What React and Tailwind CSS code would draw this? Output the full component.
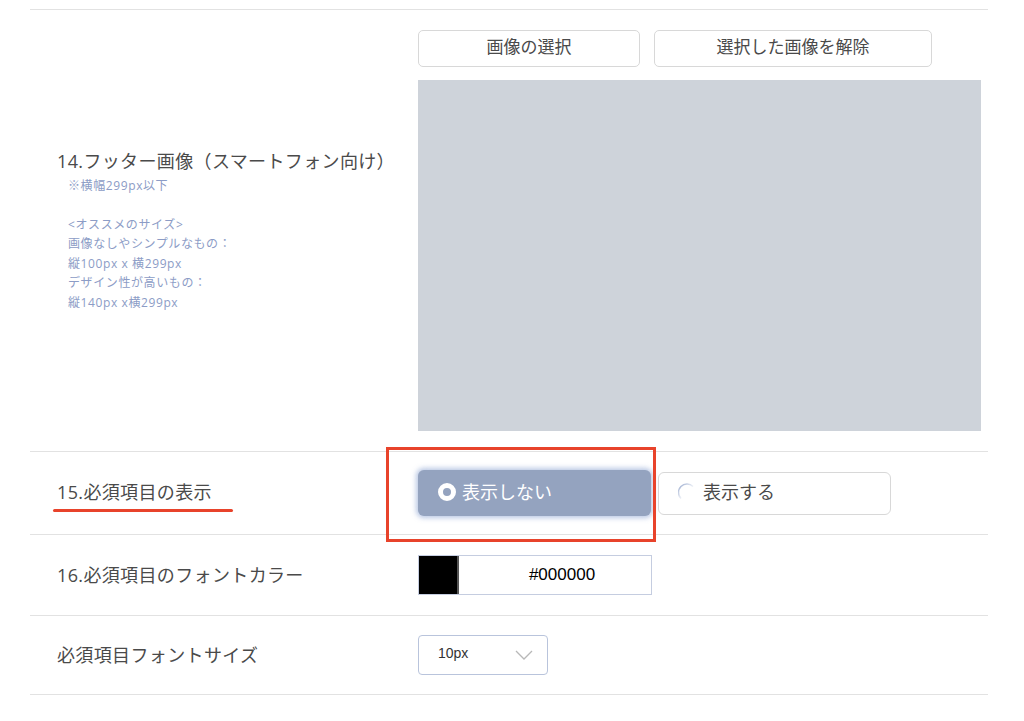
import React from "react";

const font = { fontFamily: '"Open Sans", "Noto Sans CJK JP", sans-serif' };

const Row = ({ label, children, className = "" }) => (
  <div className={`flex items-center border-b border-[#e2e2e2] ${className}`}>
    <div className="w-[388px] shrink-0 pl-[27px]">{label}</div>
    <div className="flex-1">{children}</div>
  </div>
);

const Label = ({ children }) => (
  <div className="text-[18px] leading-[24px] text-[#4a4a4a] tracking-[0.02em]">{children}</div>
);

const App = () => {
  const notes = [
    "※横幅299px以下",
    "",
    "<オススメのサイズ>",
    "画像なしやシンプルなもの：",
    "縦100px x 横299px",
    "デザイン性が高いもの：",
    "縦140px x横299px",
  ];

  return (
    <div className="min-h-[721px] bg-white pt-[9px]" style={font}>
      <div className="ml-[30px] w-[958px] border-t border-[#e2e2e2]">
        {/* 14 */}
        <Row className="h-[442px]" label={
          <div className="pt-[4px] pb-[4px]">
            <Label>14.フッター画像（スマートフォン向け）</Label>
            <div className="mt-[3px] pl-[11px] text-[12px] leading-[19.5px] text-[#8c9cc6] tracking-[0.05em]">
              {notes.map((n, i) => (
                <div key={i} className="h-[19.5px]">{n}</div>
              ))}
            </div>
          </div>
        }>
          <div className="flex flex-col">
            <div className="flex gap-[14px]">
              <button className="h-[37px] w-[222px] rounded-[5px] border border-[#d8d8d8] bg-white pb-[3px] text-[17px] text-[#4a4a4a]">画像の選択</button>
              <button className="h-[37px] w-[278px] rounded-[5px] border border-[#d8d8d8] bg-white pb-[3px] text-[17px] text-[#4a4a4a]">選択した画像を解除</button>
            </div>
            <div className="mt-[13px] h-[351px] w-[563px] bg-[#ced3da]" />
          </div>
        </Row>

        {/* 15 */}
        <Row className="h-[83px]" label={
          <div className="relative -mt-[3px]">
            <Label>15.必須項目の表示</Label>
            <div className="absolute left-[-4px] top-[29px] h-[3px] w-[180px] rounded-full bg-[#e8432b]" />
          </div>
        }>
          <div className="relative flex items-center gap-[7px]">
            <div className="pointer-events-none absolute left-[-32px] top-[-23px] h-[95px] w-[270px] border-[3px] border-[#e8432b]" />
            <div className="flex h-[46px] w-[233px] items-center rounded-[6px] bg-[#94a3bf] pl-[20px] pb-[2px] text-[18px] text-white shadow-[0_0_5px_2px_rgba(130,155,205,0.55)]">
              <span className="mr-[6px] inline-block h-[18px] w-[18px] rounded-full border-[5px] border-white" />
              表示しない
            </div>
            <div className="flex h-[43px] w-[233px] items-center rounded-[6px] border border-[#d8d8d8] bg-white pl-[19px] pb-[2px] text-[18px] text-[#4a4a4a]">
              <svg width="18" height="18" viewBox="0 0 18 18" className="mr-[7px]">
                <defs>
                  <linearGradient id="arc" x1="0" y1="0" x2="1" y2="1">
                    <stop offset="0" stopColor="#8da0c8" />
                    <stop offset="1" stopColor="#ffffff" stopOpacity="0" />
                  </linearGradient>
                </defs>
                <path d="M15 3.5 A8 8 0 0 0 3 15.5" fill="none" stroke="url(#arc)" strokeWidth="1.5" />
              </svg>
              表示する
            </div>
          </div>
        </Row>

        {/* 16 */}
        <Row className="h-[81px]" label={<Label>16.必須項目のフォントカラー</Label>}>
          <div className="flex h-[40px] w-[234px] border border-[#c5cde0]">
            <div className="w-[40px] border-r-2 border-[#555] bg-black" />
            <div className="flex flex-1 items-center justify-center pl-[14px] text-[17px] text-black" style={{ fontFamily: '"Liberation Sans", Arial, sans-serif' }}>
              #000000
            </div>
          </div>
        </Row>

        {/* 17 */}
        <Row className="h-[79px]" label={<Label>必須項目フォントサイズ</Label>}>
          <div className="flex h-[40px] w-[130px] items-center justify-between rounded-[4px] border border-[#b9c4dc] bg-white pl-[19px] pr-[14px]">
            <span className="pb-[4px] text-[14px] text-[#333]" style={{ fontFamily: '"Liberation Sans", Arial, sans-serif' }}>10px</span>
            <svg width="18" height="10" viewBox="0 0 18 10">
              <path d="M1 1 L9 9 L17 1" fill="none" stroke="#b8b8b8" strokeWidth="1.3" />
            </svg>
          </div>
        </Row>
      </div>
    </div>
  );
};

export default App;
